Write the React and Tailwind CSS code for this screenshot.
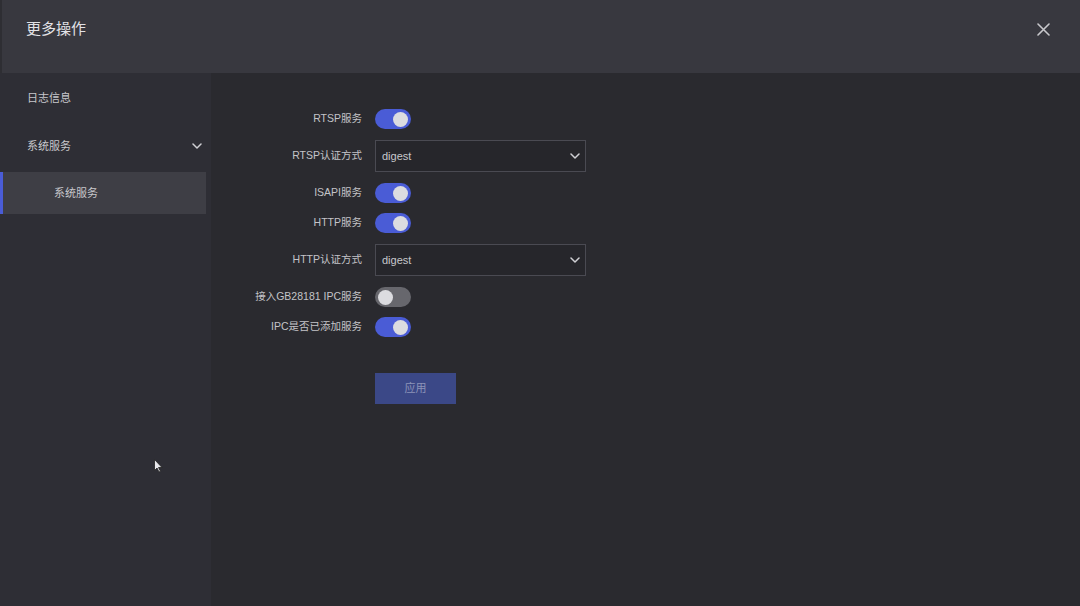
import React from "react";

const font = { fontFamily: '"Liberation Sans", "Noto Sans CJK SC", sans-serif' };

function Toggle({ on }) {
  return (
    <div
      className={`w-[36px] h-[20px] rounded-full flex items-center px-[3px] ${
        on ? "bg-[#4a5cd6] justify-end" : "bg-[#67676d] justify-start"
      }`}
    >
      <div className="w-[15px] h-[15px] rounded-full bg-[#dcdce0]" />
    </div>
  );
}

function Chevron() {
  return (
    <svg width="10" height="6" viewBox="0 0 10 6" fill="none">
      <path d="M1 1l4 4 4-4" stroke="#d0d0d4" strokeWidth="1.5" strokeLinecap="round" strokeLinejoin="round" />
    </svg>
  );
}

function Label({ children }) {
  return <div className="w-[151px] text-right text-[10.5px] text-[#c4c4c8] whitespace-nowrap">{children}</div>;
}

function ToggleRow({ label, on }) {
  return (
    <div className="flex items-center gap-[13px] h-[30px]">
      <Label>{label}</Label>
      <Toggle on={on} />
    </div>
  );
}

function SelectRow({ label, value }) {
  return (
    <div className="flex items-center gap-[13px] h-[32px] my-[6px]">
      <Label>{label}</Label>
      <div className="w-[211px] h-[32px] border border-[#4a4a52] bg-[#26262b] flex items-center justify-between pl-[6px] pr-[5px]">
        <span className="text-[11px] text-[#c8c8cc]">{value}</span>
        <Chevron />
      </div>
    </div>
  );
}

export default function App() {
  return (
    <div className="w-[1080px] h-[606px] flex flex-col bg-[#2a2a2f] relative overflow-hidden" style={font}>
      <div className="h-[73px] bg-[#38383f] flex items-center justify-between pl-[24px] pr-[30px] border-l-[2px] border-[#2e2e33] shrink-0">
        <div className="text-[15px] text-[#e2e2e6] -mt-[14px]">更多操作</div>
        <svg className="-mt-[15px]" width="13" height="13" viewBox="0 0 13 13">
          <path d="M1 1l11 11M12 1L1 12" stroke="#c8c8cc" strokeWidth="1.6" strokeLinecap="round" />
        </svg>
      </div>
      <div className="flex flex-1">
        <div className="w-[211px] bg-[#2e2e35] flex flex-col shrink-0 pr-[5px]">
          <div className="h-[50px] flex items-center pl-[27px] text-[11px] text-[#c8c8cc]">日志信息</div>
          <div className="h-[46px] flex items-center justify-between pl-[27px] pr-[4px] text-[11px] text-[#c8c8cc]">
            <span>系统服务</span>
            <Chevron />
          </div>
          <div className="h-[42px] mt-[3px] flex items-center bg-[#3e3e45] border-l-[3px] border-[#4a5cd6] pl-[51px] text-[11px] text-[#c8c8cc]">
            系统服务
          </div>
        </div>
        <div className="flex-1 flex flex-col pt-[31px]">
          <ToggleRow label="RTSP服务" on />
          <SelectRow label="RTSP认证方式" value="digest" />
          <ToggleRow label="ISAPI服务" on />
          <ToggleRow label="HTTP服务" on />
          <SelectRow label="HTTP认证方式" value="digest" />
          <ToggleRow label="接入GB28181 IPC服务" on={false} />
          <ToggleRow label="IPC是否已添加服务" on />
          <div className="flex mt-[31px] pl-[164px]">
            <div className="w-[81px] h-[31px] bg-[#3b4887] flex items-center justify-center text-[11px] text-[#8c93b8]">
              应用
            </div>
          </div>
        </div>
      </div>
      <svg className="absolute left-[154px] top-[459px]" width="9" height="14" viewBox="0 0 9 14">
        <path d="M0.5 0.5v11l2.5-2.5 2 4 1.5-0.7-2-3.8h3.5z" fill="#e8e8ec" stroke="#222" strokeWidth="0.8" />
      </svg>
    </div>
  );
}
